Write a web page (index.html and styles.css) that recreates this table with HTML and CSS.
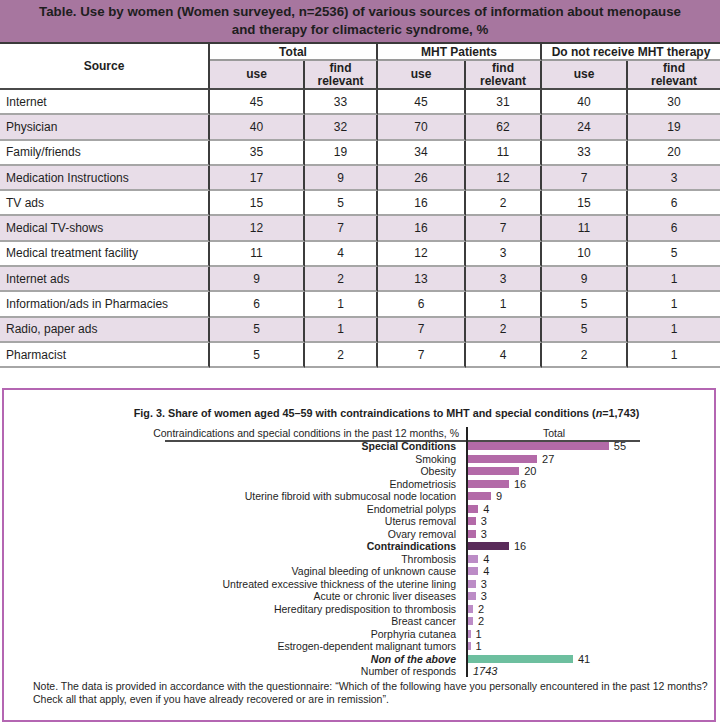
FILE: index.html
```html
<!DOCTYPE html>
<html lang="en">
<head>
<meta charset="utf-8">
<title>Menopause information sources</title>
<link rel="stylesheet" href="styles.css">
</head>
<body>
<table class="data">
  <colgroup>
    <col class="c-src"><col class="c-a"><col class="c-b"><col class="c-c"><col class="c-d"><col class="c-e"><col class="c-f">
  </colgroup>
  <thead>
    <tr class="r-title"><th colspan="7" class="title">Table. Use by women (Women surveyed, n=2536) of various sources of information about menopause<br>and therapy for climacteric syndrome, %</th></tr>
    <tr class="r-h1">
      <th rowspan="2" class="src-h vr">Source</th>
      <th colspan="2" class="grp vr">Total</th>
      <th colspan="2" class="grp vr">MHT Patients</th>
      <th colspan="2" class="grp">Do not receive MHT therapy</th>
    </tr>
    <tr class="r-h2">
      <th class="sub vr">use</th><th class="sub vr"><span class="ln">find</span><span class="ln">relevant</span></th>
      <th class="sub vr">use</th><th class="sub vr"><span class="ln">find</span><span class="ln">relevant</span></th>
      <th class="sub vr">use</th><th class="sub"><span class="ln">find</span><span class="ln">relevant</span></th>
    </tr>
  </thead>
  <tbody>
    <tr><td class="src vr">Internet</td><td class="vr">45</td><td class="vr">33</td><td class="vr">45</td><td class="vr">31</td><td class="vr">40</td><td>30</td></tr>
    <tr class="alt"><td class="src vr">Physician</td><td class="vr">40</td><td class="vr">32</td><td class="vr">70</td><td class="vr">62</td><td class="vr">24</td><td>19</td></tr>
    <tr><td class="src vr">Family/friends</td><td class="vr">35</td><td class="vr">19</td><td class="vr">34</td><td class="vr">11</td><td class="vr">33</td><td>20</td></tr>
    <tr class="alt"><td class="src vr">Medication Instructions</td><td class="vr">17</td><td class="vr">9</td><td class="vr">26</td><td class="vr">12</td><td class="vr">7</td><td>3</td></tr>
    <tr><td class="src vr">TV ads</td><td class="vr">15</td><td class="vr">5</td><td class="vr">16</td><td class="vr">2</td><td class="vr">15</td><td>6</td></tr>
    <tr class="alt"><td class="src vr">Medical TV-shows</td><td class="vr">12</td><td class="vr">7</td><td class="vr">16</td><td class="vr">7</td><td class="vr">11</td><td>6</td></tr>
    <tr><td class="src vr">Medical treatment facility</td><td class="vr">11</td><td class="vr">4</td><td class="vr">12</td><td class="vr">3</td><td class="vr">10</td><td>5</td></tr>
    <tr class="alt"><td class="src vr">Internet ads</td><td class="vr">9</td><td class="vr">2</td><td class="vr">13</td><td class="vr">3</td><td class="vr">9</td><td>1</td></tr>
    <tr><td class="src vr">Information/ads in Pharmacies</td><td class="vr">6</td><td class="vr">1</td><td class="vr">6</td><td class="vr">1</td><td class="vr">5</td><td>1</td></tr>
    <tr class="alt"><td class="src vr">Radio, paper ads</td><td class="vr">5</td><td class="vr">1</td><td class="vr">7</td><td class="vr">2</td><td class="vr">5</td><td>1</td></tr>
    <tr><td class="src vr">Pharmacist</td><td class="vr">5</td><td class="vr">2</td><td class="vr">7</td><td class="vr">4</td><td class="vr">2</td><td>1</td></tr>
  </tbody>
</table>

<section class="figbox">
  <div class="fig">
    <h2 class="fig-title">Fig. 3. Share of women aged 45–59 with contraindications to MHT and special conditions (<i>n</i>=1,743)</h2>
    <div class="chart">
      <div class="hdr-lbl"><span>Contraindications and special conditions in the past 12 months, %</span></div>
      <div class="hdr-total">Total</div>

      <div class="lbl strong">Special Conditions</div><div class="cell"><span class="bar sp" style="width:140.8px"></span><span class="num">55</span></div>
      <div class="lbl">Smoking</div><div class="cell"><span class="bar sp" style="width:69.1px"></span><span class="num">27</span></div>
      <div class="lbl">Obesity</div><div class="cell"><span class="bar sp" style="width:51.2px"></span><span class="num">20</span></div>
      <div class="lbl">Endometriosis</div><div class="cell"><span class="bar sp" style="width:41px"></span><span class="num">16</span></div>
      <div class="lbl">Uterine fibroid with submucosal node location</div><div class="cell"><span class="bar sp" style="width:23px"></span><span class="num">9</span></div>
      <div class="lbl">Endometrial polyps</div><div class="cell"><span class="bar sp" style="width:10.2px"></span><span class="num">4</span></div>
      <div class="lbl">Uterus removal</div><div class="cell"><span class="bar sp" style="width:7.7px"></span><span class="num">3</span></div>
      <div class="lbl">Ovary removal</div><div class="cell"><span class="bar sp" style="width:7.7px"></span><span class="num">3</span></div>
      <div class="lbl strong">Contraindications</div><div class="cell"><span class="bar ci-total" style="width:41px"></span><span class="num">16</span></div>
      <div class="lbl">Thrombosis</div><div class="cell"><span class="bar ci" style="width:10.2px"></span><span class="num">4</span></div>
      <div class="lbl">Vaginal bleeding of unknown cause</div><div class="cell"><span class="bar ci" style="width:10.2px"></span><span class="num">4</span></div>
      <div class="lbl">Untreated excessive thickness of the uterine lining</div><div class="cell"><span class="bar ci" style="width:7.7px"></span><span class="num">3</span></div>
      <div class="lbl">Acute or chronic liver diseases</div><div class="cell"><span class="bar ci" style="width:7.7px"></span><span class="num">3</span></div>
      <div class="lbl">Hereditary predisposition to thrombosis</div><div class="cell"><span class="bar ci" style="width:5.1px"></span><span class="num">2</span></div>
      <div class="lbl">Breast cancer</div><div class="cell"><span class="bar ci" style="width:5.1px"></span><span class="num">2</span></div>
      <div class="lbl">Porphyria cutanea</div><div class="cell"><span class="bar ci" style="width:2.6px"></span><span class="num">1</span></div>
      <div class="lbl">Estrogen-dependent malignant tumors</div><div class="cell"><span class="bar ci" style="width:2.6px"></span><span class="num">1</span></div>
      <div class="lbl strong em">Non of the above</div><div class="cell"><span class="bar none" style="width:105px"></span><span class="num">41</span></div>
      <div class="lbl">Number of responds</div><div class="cell"><span class="num em">1743</span></div>
    </div>
  </div>
  <p class="note">Note. The data is provided in accordance with the questionnaire: “Which of the following have you personally encountered in the past 12 months?<br>Check all that apply, even if you have already recovered or are in remission”.</p>
</section>
</body>
</html>
```

FILE: styles.css
```css
* { box-sizing: border-box; }

html, body {
  margin: 0;
  padding: 0;
  background: #ffffff;
}

body {
  width: 720px;
  height: 725px;
  overflow: hidden;
  font-family: "Liberation Sans", Arial, sans-serif;
  color: #1e1e1e;
}

/* ---------- Table ---------- */
.data {
  width: 720px;
  table-layout: fixed;
  border-collapse: separate;
  border-spacing: 0;
  font-size: 12px;
}

.c-src { width: 210px; }
.c-a { width: 95px; }
.c-b { width: 73px; }
.c-c { width: 88px; }
.c-d { width: 76px; }
.c-e { width: 86px; }
.c-f { width: 92px; }

.data th,
.data td {
  padding: 0;
  text-align: center;
  vertical-align: middle;
}

.r-title { height: 44px; }

.title {
  background: #a7769f;
  color: #ffffff;
  font-size: 13.3px;
  font-weight: bold;
  line-height: 18px;
  padding-top: 6px;
  border-bottom: 2px solid #3a3a3a;
}

.r-h1 { height: 17px; }
.r-h2 { height: 29px; }

.data thead th {
  font-weight: bold;
  color: #1e1e1e;
}

.grp {
  border-bottom: 2px solid #9a9a9a;
  line-height: 14px;
}

.src-h {
  border-bottom: 2px solid #4a4a4a;
  background: #ffffff;
}

.sub {
  background: #e8dde8;
  line-height: 13px;
  border-bottom: 2px solid #4a4a4a;
}

.sub .ln {
  display: block;
  line-height: 13px;
}

.vr { border-right: 2px solid #3c3c3c; }

.data tbody tr { height: 25.3px; }

.data tbody td {
  border-bottom: 2px solid #a6a6a6;
  line-height: 14px;
}

.data tbody tr.alt td { background: #e8dde8; }

.data td.src {
  text-align: left;
  padding-left: 6px;
}

/* ---------- Figure ---------- */
.figbox {
  margin: 20px 0 0 2px;
  width: 714px;
  height: 334px;
  border: 2px solid #b466b2;
  padding: 17px 0 0 0;
}

.fig {
  margin-left: 129px;
  width: 507px;
}

.fig-title {
  margin: 0 0 8px 0;
  font-size: 10.8px;
  line-height: 12px;
  font-weight: bold;
  text-align: center;
  white-space: nowrap;
  color: #1e1e1e;
}

.chart {
  margin-left: 32px;
  display: grid;
  grid-template-columns: 301px 174px;
  grid-auto-rows: 12.5px;
  font-size: 10.5px;
  line-height: 12px;
}

.hdr-lbl,
.hdr-total {
  height: 15px;
  border-bottom: 2px solid #4a4a4a;
}

.chart > .hdr-lbl,
.chart > .hdr-total {
  align-self: start;
}

.hdr-lbl {
  display: flex;
  justify-content: flex-end;
  padding-right: 7px;
  white-space: nowrap;
}

.hdr-total {
  text-align: center;
  border-left: 2px solid #222222;
}

.lbl {
  text-align: right;
  padding-right: 10px;
  white-space: nowrap;
  display: flex;
  align-items: center;
  justify-content: flex-end;
}

.lbl.strong { font-weight: bold; }
.em { font-style: italic; }

.cell {
  border-left: 2px solid #222222;
  display: flex;
  align-items: center;
}

.bar {
  display: block;
  height: 8px;
  flex: none;
}

.bar.sp { background: #b36aa8; }
.bar.ci { background: #bc8cc6; }
.bar.ci-total { background: #5a2b5a; }
.bar.none { background: #6dbf9f; }

.num {
  margin-left: 5px;
  font-size: 11px;
}

.note {
  margin: 3px 0 0 29px;
  font-size: 10.5px;
  line-height: 13px;
  white-space: nowrap;
}
```
